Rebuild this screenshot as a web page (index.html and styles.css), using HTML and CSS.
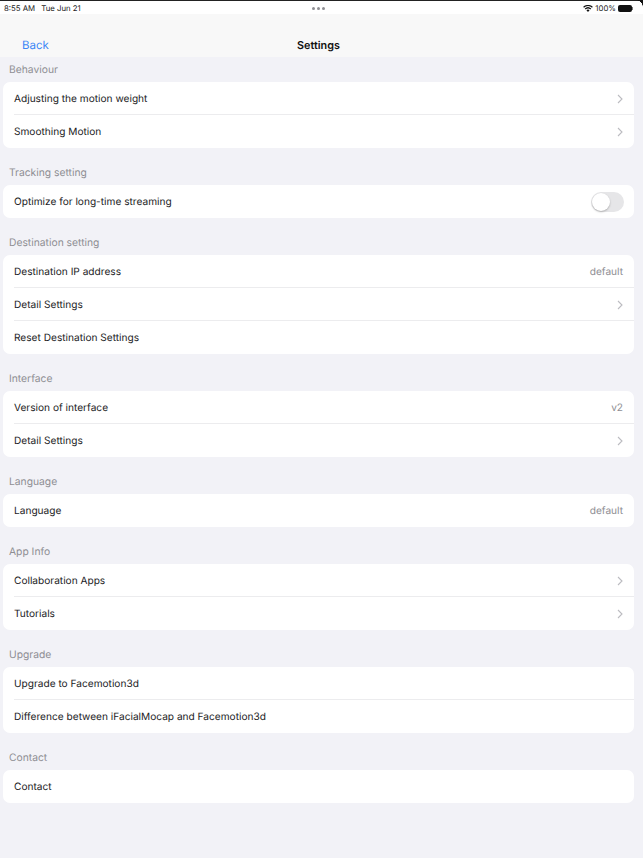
FILE: index.html
```html
<!DOCTYPE html>
<html lang="en">
<head>
<meta charset="utf-8">
<title>Settings</title>
<link rel="stylesheet" href="styles.css">
</head>
<body>
<div class="status">
  <div class="status-left"><span>8:55 AM</span><span>Tue Jun 21</span></div>
  <div class="dots"><i></i><i></i><i></i></div>
  <div class="status-right">
    <svg class="wifi" width="10" height="7" viewBox="0 0 11 8"><path d="M5.500 8 3.700 6a2.600 2.600 0 0 1 3.600 0zM2.800 5.100 1.800 4a5.400 5.400 0 0 1 7.400 0l-1 1.100a4 4 0 0 0-5.400 0zM.9 3.100 0 2.100a8 8 0 0 1 11 0l-.9 1a6.700 6.700 0 0 0-9.200 0z" fill="#111"/></svg>
    <span>100%</span>
    <span class="battery"></span>
  </div>
  <span class="corner"></span>
</div>
<header class="nav">
  <span class="back">Back</span>
  <span class="title">Settings</span>
</header>
<main class="content">
  <section>
    <h2>Behaviour</h2>
    <div class="card">
      <div class="row"><span>Adjusting the motion weight</span><svg class="chev" viewBox="0 0 6 10"><path d="M1 1l4 4-4 4"/></svg></div>
      <div class="row"><span>Smoothing Motion</span><svg class="chev" viewBox="0 0 6 10"><path d="M1 1l4 4-4 4"/></svg></div>
    </div>
  </section>
  <section>
    <h2>Tracking setting</h2>
    <div class="card">
      <div class="row"><span>Optimize for long-time streaming</span><span class="switch"><i></i></span></div>
    </div>
  </section>
  <section>
    <h2>Destination setting</h2>
    <div class="card">
      <div class="row"><span>Destination IP address</span><span class="value">default</span></div>
      <div class="row"><span>Detail Settings</span><svg class="chev" viewBox="0 0 6 10"><path d="M1 1l4 4-4 4"/></svg></div>
      <div class="row"><span>Reset Destination Settings</span></div>
    </div>
  </section>
  <section>
    <h2>Interface</h2>
    <div class="card">
      <div class="row"><span>Version of interface</span><span class="value">v2</span></div>
      <div class="row"><span>Detail Settings</span><svg class="chev" viewBox="0 0 6 10"><path d="M1 1l4 4-4 4"/></svg></div>
    </div>
  </section>
  <section>
    <h2>Language</h2>
    <div class="card">
      <div class="row"><span>Language</span><span class="value">default</span></div>
    </div>
  </section>
  <section>
    <h2>App Info</h2>
    <div class="card">
      <div class="row"><span>Collaboration Apps</span><svg class="chev" viewBox="0 0 6 10"><path d="M1 1l4 4-4 4"/></svg></div>
      <div class="row"><span>Tutorials</span><svg class="chev" viewBox="0 0 6 10"><path d="M1 1l4 4-4 4"/></svg></div>
    </div>
  </section>
  <section>
    <h2>Upgrade</h2>
    <div class="card">
      <div class="row"><span>Upgrade to Facemotion3d</span></div>
      <div class="row"><span>Difference between iFacialMocap and Facemotion3d</span></div>
    </div>
  </section>
  <section>
    <h2>Contact</h2>
    <div class="card">
      <div class="row"><span>Contact</span></div>
    </div>
  </section>
</main>
</body>
</html>
```
FILE: styles.css
```css
* { box-sizing: border-box; }
html, body { margin: 0; padding: 0; }
body {
  width: 643px;
  height: 858px;
  overflow: hidden;
  background: #f2f2f7;
  font-family: Inter, "Liberation Sans", sans-serif;
  color: #1c1c1e;
  text-rendering: geometricPrecision;
}
.status {
  height: 14px;
  background: #fff;
  border-top: 1px solid #222;
  display: flex;
  align-items: center;
  justify-content: space-between;
  padding: 2px 9px 0 4px;
  font-size: 7.800px;
  line-height: 1;
  color: #222;
  position: relative;
}
.status-left { display: flex; gap: 6px; }
.dots { display: flex; gap: 2px; position: absolute; left: 312px; top: 6px; }
.dots i { width: 3px; height: 3px; border-radius: 50%; background: #8e8e93; }
.status-right { display: flex; align-items: center; gap: 2px; }
.corner {
  position: absolute;
  right: 0;
  top: -1px;
  width: 7px;
  height: 7px;
  background: radial-gradient(circle at 0 100%, transparent 6.500px, #111 7px);
}
.battery {
  width: 14px;
  height: 7px;
  display: block;
  margin-right: 2px;
  border-radius: 2px;
  background: #111;
  position: relative;
}
.battery::after {
  content: "";
  position: absolute;
  left: 14px;
  top: 2px;
  width: 1px;
  height: 3px;
  background: #777;
}
.nav {
  height: 43px;
  background: #f8f8f8;
  display: flex;
  align-items: flex-end;
  justify-content: center;
  position: relative;
  padding: 0 6px 4px 0;
}
.title { font-size: 10.800px; font-weight: 600; line-height: 14px; color: #111; }
.back {
  position: absolute;
  left: 22px;
  bottom: 4px;
  font-size: 11.500px;
  line-height: 16px;
  color: #3c87f6;
}
.content {
  padding: 0 9px 0 3px;
  display: flex;
  flex-direction: column;
  gap: 12px;
}
h2 {
  margin: 0;
  height: 25px;
  padding: 5.500px 0 0 6px;
  font-size: 10.300px;
  line-height: 14px;
  font-weight: 400;
  color: #8e8e93;
}
.card {
  background: #fff;
  border-radius: 7px;
  overflow: hidden;
}
.row {
  height: 33px;
  margin-left: 11px;
  padding: 1px 11px 0 0;
  display: flex;
  align-items: center;
  justify-content: space-between;
  font-size: 10.150px;
  line-height: 14px;
  color: #1c1c1e;
  border-bottom: 1px solid #ececee;
}
.row:last-child { border-bottom: 0; padding-top: 0; }
.value { color: #8e8e93; }
.chev {
  width: 6px;
  height: 10px;
  fill: none;
  stroke: #bcbcc1;
  stroke-width: 1.100;
}
.switch {
  width: 33px;
  height: 20px;
  margin-right: -1px;
  border-radius: 10px;
  background: #e6e6e8;
  position: relative;
}
.switch i {
  position: absolute;
  left: 1px;
  top: 1px;
  width: 18px;
  height: 18px;
  border-radius: 50%;
  background: #fff;
  box-shadow: 0 1px 2px rgba(0,0,0,.25);
}
```
